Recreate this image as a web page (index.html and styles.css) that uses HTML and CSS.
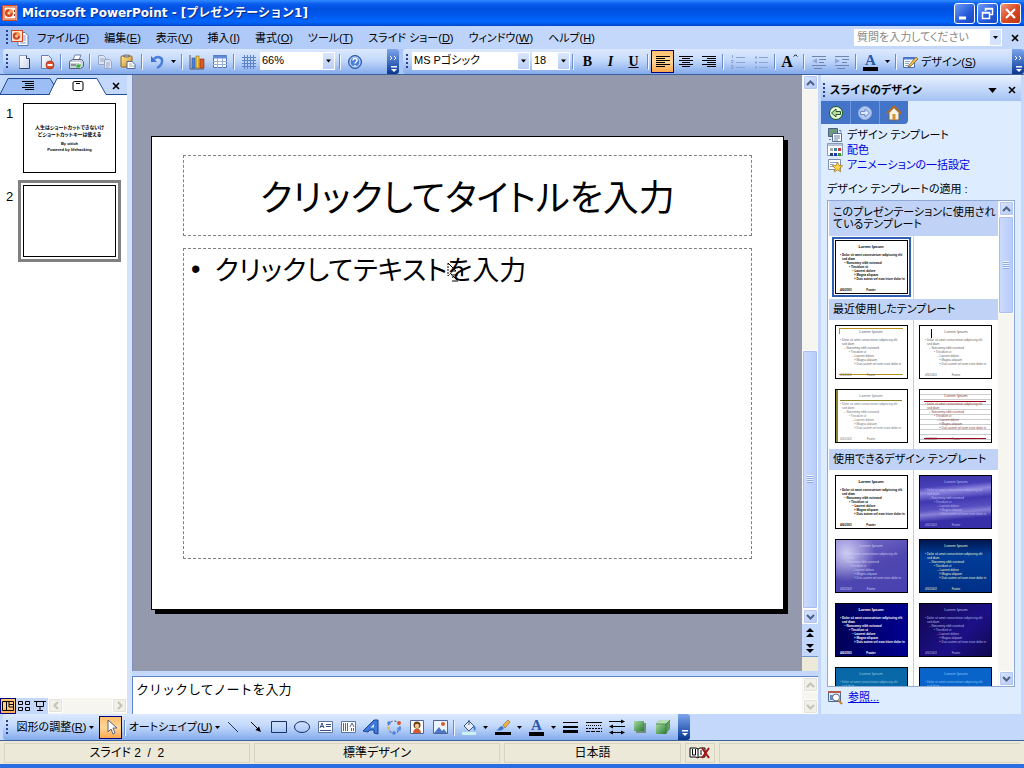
FILE: index.html
```html
<!DOCTYPE html>
<html lang="ja">
<head>
<meta charset="utf-8">
<meta name="viewport" content="width=device-width, initial-scale=1">
<title>Microsoft PowerPoint - [プレゼンテーション1]</title>
<link rel="stylesheet" href="styles.css">
</head>
<body>
<svg class="sprite" aria-hidden="true">
  <defs>
    <linearGradient id="gGold" x2="1" y2="1"><stop offset="0" stop-color="#ffe9a0"/><stop offset="1" stop-color="#c98a1a"/></linearGradient>
    <linearGradient id="gGreen" x2="1" y2="1"><stop offset="0" stop-color="#a5dba0"/><stop offset="1" stop-color="#2c7a35"/></linearGradient>
    <linearGradient id="gPage" x2="1" y2="1"><stop offset="0" stop-color="#fff"/><stop offset="1" stop-color="#c6d3ee"/></linearGradient>
  </defs>
  <symbol id="down" viewBox="0 0 5 3"><path d="M0 0h5L2.500 3z"/></symbol>
  <symbol id="chev-up" viewBox="0 0 9 6"><path d="M1 5l3.500-3.500L8 5" fill="none" stroke="currentColor" stroke-width="2"/></symbol>
  <symbol id="chev-down" viewBox="0 0 9 6"><path d="M1 1l3.500 3.500L8 1" fill="none" stroke="currentColor" stroke-width="2"/></symbol>
  <symbol id="chev-left" viewBox="0 0 6 9"><path d="M5 1L1.500 4.500 5 8" fill="none" stroke="currentColor" stroke-width="2"/></symbol>
  <symbol id="chev-right" viewBox="0 0 6 9"><path d="M1 1l3.500 3.500L1 8" fill="none" stroke="currentColor" stroke-width="2"/></symbol>
  <symbol id="cross" viewBox="0 0 8 8"><path d="M1 1l6 6M7 1L1 7" fill="none" stroke="currentColor" stroke-width="1.600"/></symbol>
  <symbol id="more" viewBox="0 0 9 22"><path d="M1 5l2 2-2 2M5 5l2 2-2 2" fill="none" stroke="#fff"/><path d="M2 15h6v1.500H2zM2 18h6l-3 3z" fill="#fff"/></symbol>
  <symbol id="more-plain" viewBox="0 0 9 22"><path d="M2 14h6v1.500H2zM2 17h6l-3 3z" fill="#fff"/></symbol>
  <symbol id="ppt" viewBox="0 0 16 16"><rect x=".5" y=".5" width="15" height="15" rx="1" fill="#f7d9c4" stroke="#d2451e"/><rect x="2" y="2" width="12" height="12" fill="#fff5ec" stroke="#d2562c"/><circle cx="7" cy="8" r="4" fill="#d2451e"/><circle cx="7" cy="8" r="1.600" fill="#ffd9b8"/><path d="M7 8V4a4 4 0 0 1 4 4z" fill="#f4a04c"/><path d="M12.500 5v2M12.500 9v2" stroke="#933"/></symbol>
  <symbol id="doc" viewBox="0 0 18 16"><path d="M7 2.500h7l3 3v10H7z" fill="#fff" stroke="#5a76b5"/><path d="M12 6h3M12 8h3M12 10h3M9 13h6" stroke="#7c9ad2"/><rect x=".5" y=".5" width="11" height="11" fill="#fbe2d0" stroke="#d2451e"/><circle cx="5.500" cy="6" r="3.700" fill="#d2451e"/><circle cx="5.500" cy="6" r="1.500" fill="#ffd9b8"/><path d="M5.500 6V2.300A3.700 3.700 0 0 1 9.200 6z" fill="#f4a04c"/></symbol>
  <symbol id="new" viewBox="0 0 16 16"><path d="M3.500 1.500h7l3 3v10h-10z" fill="url(#gPage)" stroke="#8a9bc0"/><path d="M13.500 5v9.500h-10" fill="none" stroke="#31456f"/><path d="M10.500 1.500v3h3" fill="#fff" stroke="#31456f"/></symbol>
  <symbol id="perm" viewBox="0 0 16 16"><path d="M2.500 1.500h7l3 3v10h-10z" fill="url(#gPage)" stroke="#6b7da8"/><circle cx="11" cy="11" r="4" fill="#dc4d28" stroke="#a12c10" stroke-width=".7"/><path d="M8.500 11h5" stroke="#fff" stroke-width="2"/></symbol>
  <symbol id="print" viewBox="0 0 16 16"><path d="M5 6l2-5h6l-2 5z" fill="#fff" stroke="#6d80ad"/><path d="M1.500 7.500l3-2h9l2 2v5l-3 2h-11z" fill="#ccd2de" stroke="#56617d"/><path d="M2 8.500h10v5" fill="none" stroke="#fff"/><path d="M9 10.500h4l-1 3H8z" fill="#2fb52f"/><path d="M3 11h5" stroke="#455"/></symbol>
  <symbol id="copy" viewBox="0 0 16 16"><g fill="#dce4f4" stroke="#9aa7c4"><path d="M1.500 1.500h5l2 2v7h-7z"/><path d="M7.500 5.500h5l2 2v7h-7z"/></g><path d="M3 5h4M3 7h4M9 9h4M9 11h4M9 13h3" stroke="#9aa7c4"/></symbol>
  <symbol id="paste" viewBox="0 0 16 16"><rect x="1" y="2" width="11" height="11" rx="1" fill="url(#gGold)" stroke="#946512"/><path d="M4 3V1h5v2z" fill="#bbb" stroke="#555" stroke-width=".7"/><path d="M7 7.500h5l3 3v4H7z" fill="#fff" stroke="#50649a"/><path d="M9 10h3M9 12h5" stroke="#8ba"/></symbol>
  <symbol id="undo" viewBox="0 0 16 16"><path d="M2 2v6h6z" fill="#3c6fd1"/><path d="M5 5c4-4 9-1 8 3-.5 3-3 5-5 6" fill="none" stroke="#4b7fdd" stroke-width="2.500"/></symbol>
  <symbol id="chart" viewBox="0 0 16 16"><path d="M1 1v14h14" fill="none" stroke="#556"/><rect x="3" y="4" width="3" height="10" fill="#4c84dd" stroke="#224d9a" stroke-width=".6"/><rect x="7" y="2" width="3" height="12" fill="#f3c948" stroke="#946512" stroke-width=".6"/><rect x="11" y="5" width="4" height="9" fill="#dd5824" stroke="#902d0c" stroke-width=".6"/></symbol>
  <symbol id="table" viewBox="0 0 16 16"><path d="M1.500 1.500h13v12h-13z" fill="#fff" stroke="#4d73b7"/><path d="M1 3h14" stroke="#5f8bd7" stroke-width="3"/><path d="M1 7.500h14M1 10.500h14M5.500 4v10M10.500 4v10" stroke="#93afdc"/></symbol>
  <symbol id="grid" viewBox="0 0 16 16"><path d="M3.500 1v14M6.500 1v14M9.500 1v14M12.500 1v14M1 3.500h14M1 6.500h14M1 9.500h14M1 12.500h14" stroke="#5d83c8"/></symbol>
  <symbol id="help" viewBox="0 0 16 16"><circle cx="8" cy="8" r="6.500" fill="#4a80db" stroke="#2a549f"/><circle cx="8" cy="8" r="5" fill="none" stroke="#dceaff"/><path d="M6 6.500c0-3 4.500-2.500 4 0C10 8 8 8 8 9.500M8 11v1.500" fill="none" stroke="#fff" stroke-width="1.500"/></symbol>
  <symbol id="al" viewBox="0 0 16 16"><path d="M1 2.500h14M1 4.500h9M1 6.500h14M1 8.500h9M1 10.500h14M1 12.500h9" stroke="#000"/></symbol>
  <symbol id="ac" viewBox="0 0 16 16"><path d="M1 2.500h14M4 4.500h8M1 6.500h14M4 8.500h8M1 10.500h14M4 12.500h8" stroke="#000"/></symbol>
  <symbol id="ar" viewBox="0 0 16 16"><path d="M1 2.500h14M6 4.500h9M1 6.500h14M6 8.500h9M1 10.500h14M6 12.500h9" stroke="#000"/></symbol>
  <symbol id="num" viewBox="0 0 16 16"><path d="M6 3.500h9M6 8.500h9M6 13.500h9M2.500 1v3M1 6.500h2v2H1M1 11.500h2v3H1M1 13h2" fill="none" stroke="#8fa3cf"/></symbol>
  <symbol id="bul" viewBox="0 0 16 16"><path d="M6 3.500h9M6 8.500h9M6 13.500h9" stroke="#8fa3cf"/><path d="M2 2.500h2v2H2zM2 7.500h2v2H2zM2 12.500h2v2H2z" fill="#8fa3cf"/></symbol>
  <symbol id="outd" viewBox="0 0 16 16"><path d="M1 2.500h14M8 5.500h7M8 8.500h5M1 11.500h14M3 14.500h8" stroke="#7184ad"/><path d="M6 4.500v5L1 7z" fill="#8ba7df"/></symbol>
  <symbol id="ind" viewBox="0 0 16 16"><path d="M1 2.500h14M8 5.500h7M8 8.500h5M1 11.500h14M3 14.500h8" stroke="#7184ad"/><path d="M1 4.500v5L6 7z" fill="#8ba7df"/></symbol>
  <symbol id="design" viewBox="0 0 16 16"><path d="M1.500 3.500h11v10h-11z" fill="#fff" stroke="#4d6cad"/><path d="M1 4.500h12" stroke="#4c7ad0" stroke-width="2"/><path d="M3 7.500h5M3 9.500h4M3 11.500h6" stroke="#8aa6d8"/><path d="M7 11l7-8 2 2-7 7-3 1z" fill="#f0c04c" stroke="#6d5120" stroke-width=".7"/></symbol>
  <symbol id="pointer" viewBox="0 0 16 16"><path d="M5 1v12l3-3 2 5 2-1-2-5h4z" fill="#fff" stroke="#56607c"/></symbol>
  <symbol id="line" viewBox="0 0 16 16"><path d="M3 3l10 10" stroke="#19306a"/></symbol>
  <symbol id="arrow" viewBox="0 0 16 16"><path d="M3 3l8 8" stroke="#000"/><path d="M13 13L7.500 11 11 7.500z"/></symbol>
  <symbol id="rect" viewBox="0 0 16 16"><path d="M.5 2.500h15v11H.5z" fill="none" stroke="#19306a"/></symbol>
  <symbol id="oval" viewBox="0 0 16 16"><ellipse cx="8" cy="8" rx="7.500" ry="5.500" fill="none" stroke="#19306a"/></symbol>
  <symbol id="tbox" viewBox="0 0 16 16"><path d="M1.500 2.500h14v11h-14z" fill="#fff" stroke="#5e75a4"/><path d="M3 9l2-5 2 5M4 7.500h2M9 5.500h5M9 7.500h5M3 11.500h11" fill="none" stroke="#344f8a"/></symbol>
  <symbol id="vtbox" viewBox="0 0 16 16"><path d="M1.500 2.500h14v11h-14z" fill="#fff" stroke="#5e75a4"/><path d="M3.500 4v8M5.500 4v8M7.500 4v8M11.500 9v3M13.500 9v3M10 8l2-4 2 4" fill="none" stroke="#4d6595"/></symbol>
  <symbol id="wart" viewBox="0 0 16 16"><path d="M0 12L11 1h4v14l-4-1v-3H7l-2 2z" fill="#3f7bdc" stroke="#1c438f"/><path d="M11 5v3.500H7.500z" fill="#dce9ff"/></symbol>
  <symbol id="diag" viewBox="0 0 16 16"><circle cx="8" cy="8" r="6" fill="none" stroke="#335" stroke-dasharray="2 2"/><circle cx="3" cy="4" r="1.800" fill="#4c80d8"/><circle cx="13" cy="4" r="2" fill="#d05a2a"/><circle cx="2.500" cy="9" r="1.500" fill="#e6bb42"/><circle cx="13" cy="10" r="2" fill="#5c8fe2"/><circle cx="8" cy="14" r="1.800" fill="#4c80d8"/></symbol>
  <symbol id="clip" viewBox="0 0 16 16"><path d="M1.500 1.500h13v13h-13z" fill="#fff" stroke="#50649a"/><path d="M4 14c0-6 8-6 8 0z" fill="#d8592a"/><circle cx="8" cy="6" r="3.500" fill="#6b4120"/><circle cx="8" cy="7" r="2.200" fill="#f5c58c"/></symbol>
  <symbol id="pict" viewBox="0 0 16 16"><path d="M1.500 1.500h14v13h-14z" fill="#eef4ff" stroke="#50649a"/><path d="M2 14l5-6 3 4 2-2 3 4z" fill="#4b78c6"/><circle cx="11" cy="5" r="2" fill="#d95b29"/></symbol>
  <symbol id="fill" viewBox="0 0 16 16"><path d="M3 7l5-5 5 5-5 5z" fill="#e4ecfa" stroke="#3b5380"/><path d="M8 6V1" stroke="#3b5380"/><path d="M12 6c3 1 3 4 2 6-1-1-2-3-2-6z" fill="#3e78d8"/><path d="M1 13h14v3H1z" fill="#c9f2ee"/></symbol>
  <symbol id="lcol" viewBox="0 0 16 16"><path d="M0 13h16v3H0z"/><path d="M1 11c3 0 3-4 6-4l2 2c-2 3-4 3-8 2z" fill="#3f76d2"/><path d="M8 6l5-5 2 2-5 6z" fill="#eeb63e" stroke="#876021" stroke-width=".6"/></symbol>
  <symbol id="lines" viewBox="0 0 16 16"><path d="M0 3.500h15" stroke="#000"/><path d="M0 8h15" stroke="#000" stroke-width="2"/><path d="M0 12.500h15" stroke="#000" stroke-width="3"/></symbol>
  <symbol id="dash" viewBox="0 0 16 16"><path d="M0 3.500h16" stroke="#000"/><path d="M0 6.500h16" stroke="#000" stroke-dasharray="1 1"/><path d="M0 9.500h16" stroke="#000" stroke-dasharray="2 1"/><path d="M0 12.500h16" stroke="#000" stroke-dasharray="4 1"/></symbol>
  <symbol id="arrs" viewBox="0 0 16 16"><path d="M0 2.500h13M3 7.500h13M2 13.500h12" stroke="#000"/><path d="M12 .5l4 2-4 2zM4 5.500l-4 2 4 2zM12 11.500l4 2-4 2zM4 11.500l-4 2 4 2z"/></symbol>
  <symbol id="shad" viewBox="0 0 16 16"><path d="M4 4h10v10H4z" fill="#6f8f78"/><path d="M2 2h10v10H2z" fill="url(#gGreen)"/></symbol>
  <symbol id="cube" viewBox="0 0 16 16"><path d="M1 5l4-4h10v9l-4 5H1z" fill="#5c9d60"/><path d="M1 5h10v10H1z" fill="url(#gGreen)"/><path d="M1 5l4-4h10l-4 4z" fill="#b6dfb2"/><path d="M11 5v10M1 5h10l4-4" fill="none" stroke="#357a3b" stroke-width=".7"/></symbol>
  <symbol id="spell" viewBox="0 0 22 16"><path d="M1 3h6l2 1 2-1h5v9H10l-1 1-2-1H1z" fill="#fff" stroke="#000"/><path d="M9 4v8M3.500 4v6h3V4M12 5v5" fill="none" stroke="#000"/><path d="M13 3l7 10M20 3l-7 10" stroke="#a01414" stroke-width="2"/></symbol>
  <symbol id="back" viewBox="0 0 16 16"><circle cx="8" cy="8" r="6.500" fill="#e9f7df" stroke="#1f5a1f"/><path d="M12.500 6.500H8V4L3.500 8 8 12V9.500h4.500z" fill="#b6dca0" stroke="#245a24"/></symbol>
  <symbol id="fwd" viewBox="0 0 16 16"><circle cx="8" cy="8" r="6.500" fill="#b5c9ef" stroke="#94aee0"/><path d="M3.500 6.500H8V4l4.500 4L8 12V9.500H3.500z" fill="#dde8fb" stroke="#6f8ccc"/></symbol>
  <symbol id="home" viewBox="0 0 16 16"><path d="M3 7h10v8H3z" fill="#f7f1e2" stroke="#70675c"/><path d="M3 8l5-5 5 5z" fill="#f7f1e2"/><path d="M1 8.500L8 1.500l7 7" fill="none" stroke="#b06a22" stroke-width="2"/><path d="M6.500 9h3v6h-3z" fill="#d4902e"/></symbol>
  <symbol id="tpl" viewBox="0 0 16 16"><path d="M1.500 1.500h9v8h-9z" fill="#6d9a7c" stroke="#4a6384"/><path d="M5.500 6.500h9v8h-9z" fill="#fff" stroke="#587097"/><path d="M2 12.500h2M12 3.500h2v2M7 9h6M7 11h6M7 13h4" fill="none" stroke="#6481aa"/></symbol>
  <symbol id="cols" viewBox="0 0 16 16"><path d="M.5 1.500h15v12H.5z" fill="#fff" stroke="#8a9bb8"/><path d="M1 3h14" stroke="#b8c4da" stroke-width="2"/><path d="M3 6h3v3H3z" fill="#aaa"/><path d="M7 6h3v3H7z" fill="#38a"/><path d="M11 6h3v3h-3z" fill="#c33"/><path d="M3 11h3v3H3z" fill="#247"/><path d="M7 11h3v3H7z" fill="#23b"/><path d="M11 11h3v3h-3z" fill="#393"/></symbol>
  <symbol id="anim" viewBox="0 0 16 16"><path d="M1.500 2.500h12v10h-12z" fill="#fff" stroke="#7c8db0"/><path d="M3 5.500h7M3 7.500h4M3 9.500h4" stroke="#8ca2cc"/><path d="M10.500 5l1.500 3.500 3.500.3-2.700 2.400.9 3.600-3.200-2-3.200 2 .9-3.600L5.500 8.800 9 8.500z" fill="#ffd84a" stroke="#a6761a" stroke-width=".8"/></symbol>
  <symbol id="browse" viewBox="0 0 16 16"><path d="M1.500 2.500h12v10h-12z" fill="#dfe9fa" stroke="#50688f"/><path d="M1 3h13" stroke="#b35a4a" stroke-width="2"/><path d="M3 6h3v5H3z" fill="#5d88cc"/><circle cx="9" cy="8.500" r="3.500" fill="#fff" stroke="#5b6a86"/><path d="M11.500 11.500l3.500 3.500" stroke="#c9802a" stroke-width="2"/></symbol>
</svg>
<svg class="hidden" aria-hidden="true">
  <symbol id="lorem" viewBox="0 0 70 52">
    <g fill="currentColor" font-family="Liberation Sans, sans-serif" font-size="3">
      <text x="35" y="7" text-anchor="middle" font-size="4">Lorem Ipsum</text>
      <text x="4" y="15">• Dolor sit amet consectetuer adipiscing elit</text>
      <text x="6" y="18.500">sed diam</text>
      <text x="8" y="23">– Nonummy nibh euismod</text>
      <text x="13" y="27">• Tincidunt ut</text>
      <text x="16" y="31">– Laoreet dolore</text>
      <text x="18" y="35">» Magna aliquam</text>
      <text x="18" y="39">» Duis autem vel eum iriure dolor in</text>
      <text x="4" y="50">4/6/2003</text><text x="35" y="50" text-anchor="middle">Footer</text>
    </g>
  </symbol>
</svg>

<div class="app">
  <header class="titlebar">
    <svg class="i16"><use href="#ppt"/></svg>
    <h1>Microsoft PowerPoint - [プレゼンテーション1]</h1>
    <button class="win" aria-label="最小化"><svg viewBox="0 0 19 19"><path d="M4 14h7" stroke="#fff" stroke-width="3"/></svg></button>
    <button class="win" aria-label="元に戻す"><svg viewBox="0 0 19 19"><path d="M7.500 7V4.500h7v6H12M7 5h8M4.500 8.500h7v6h-7zM4 9h8" fill="none" stroke="#fff" stroke-width="1.500"/></svg></button>
    <button class="win win-close" aria-label="閉じる"><svg viewBox="0 0 19 19"><path d="M5 5l9 9M14 5l-9 9" stroke="#fff" stroke-width="2.200"/></svg></button>
  </header>

  <nav class="menubar">
    <span class="grip"></span>
    <svg class="docicon"><use href="#doc"/></svg>
    <button>ファイル(<u>F</u>)</button><button>編集(<u>E</u>)</button><button>表示(<u>V</u>)</button><button>挿入(<u>I</u>)</button><button>書式(<u>O</u>)</button><button>ツール(<u>T</u>)</button><button>スライド ショー(<u>D</u>)</button><button>ウィンドウ(<u>W</u>)</button><button>ヘルプ(<u>H</u>)</button>
    <div class="ask"><input type="text" placeholder="質問を入力してください" aria-label="質問"><button aria-label="質問の一覧"><svg class="dn"><use href="#down"/></svg></button></div>
    <button class="x" aria-label="文書を閉じる"><svg class="i8"><use href="#cross"/></svg></button>
  </nav>

  <div class="bars">
    <div class="toolbar standard">
      <span class="grip"></span>
      <button class="tb" aria-label="新規作成"><svg><use href="#new"/></svg></button>
      <button class="tb" aria-label="アクセス許可"><svg><use href="#perm"/></svg></button>
      <i class="sep"></i>
      <button class="tb" aria-label="印刷"><svg><use href="#print"/></svg></button>
      <i class="sep"></i>
      <button class="tb" aria-label="コピー"><svg><use href="#copy"/></svg></button>
      <button class="tb" aria-label="貼り付け"><svg><use href="#paste"/></svg></button>
      <i class="sep"></i>
      <button class="tb" aria-label="元に戻す"><svg><use href="#undo"/></svg></button>
      <button class="drop" aria-label="元に戻す一覧"><svg class="dn"><use href="#down"/></svg></button>
      <i class="sep"></i>
      <button class="tb" aria-label="グラフ"><svg><use href="#chart"/></svg></button>
      <button class="tb" aria-label="表"><svg><use href="#table"/></svg></button>
      <i class="sep"></i>
      <button class="tb" aria-label="グリッド"><svg><use href="#grid"/></svg></button>
      <span class="combo zoom"><select aria-label="ズーム"><option>66%</option></select><svg class="dn"><use href="#down"/></svg></span>
      <i class="sep"></i>
      <button class="tb" aria-label="ヘルプ"><svg><use href="#help"/></svg></button>
      <button class="more" aria-label="その他"><svg><use href="#more"/></svg></button>
    </div>
    <div class="toolbar formatting">
      <span class="grip"></span>
      <span class="combo font"><select aria-label="フォント"><option>MS Pゴシック</option></select><svg class="dn"><use href="#down"/></svg></span>
      <span class="combo size"><select aria-label="サイズ"><option>18</option></select><svg class="dn"><use href="#down"/></svg></span>
      <i class="sep"></i>
      <button class="tb letter">B</button><button class="tb letter ital">I</button><button class="tb letter und">U</button>
      <i class="sep"></i>
      <button class="tb on" aria-label="左揃え"><svg><use href="#al"/></svg></button>
      <button class="tb" aria-label="中央揃え"><svg><use href="#ac"/></svg></button>
      <button class="tb" aria-label="右揃え"><svg><use href="#ar"/></svg></button>
      <i class="sep"></i>
      <button class="tb" aria-label="段落番号"><svg><use href="#num"/></svg></button>
      <button class="tb" aria-label="箇条書き"><svg><use href="#bul"/></svg></button>
      <i class="sep"></i>
      <button class="tb grow" aria-label="フォントの拡大">A<svg class="dn"><use href="#chev-up"/></svg></button>
      <i class="sep"></i>
      <button class="tb" aria-label="インデント解除"><svg><use href="#outd"/></svg></button>
      <button class="tb" aria-label="インデント"><svg><use href="#ind"/></svg></button>
      <i class="sep"></i>
      <button class="tb color" aria-label="フォントの色">A</button>
      <button class="drop" aria-label="色の一覧"><svg class="dn"><use href="#down"/></svg></button>
      <i class="sep"></i>
      <button class="tb wide"><svg><use href="#design"/></svg><span>デザイン(<u>S</u>)</span></button>
      <button class="more" aria-label="その他"><svg><use href="#more"/></svg></button>
    </div>
  </div>

  <main class="work">
    <aside class="outline">
      <div class="tabs">
        <svg class="tabart" viewBox="0 0 127 18"><path d="M0 17.500L8 1.500h42l5 8-5 8z" fill="#9dbef5" stroke="#1e4a9c"/><path d="M49 17.500l8-16h40l9 16" fill="#fff" stroke="#1e4a9c"/><path d="M106 17.500h21" stroke="#1e4a9c"/></svg>
        <button class="tab" aria-label="アウトライン"><svg viewBox="0 0 14 12"><path d="M1 1.500h12M4 3.500h9M4 5.500h9M1 7.500h12M4 9.500h9" stroke="#000"/></svg></button>
        <button class="tab" aria-label="スライド"><svg viewBox="0 0 14 12"><rect x="2" y="1.500" width="10" height="9" rx="1.500" fill="#fff" stroke="#000"/><path d="M5 3.500h4" stroke="#000"/></svg></button>
        <button class="x" aria-label="閉じる"><svg class="i8"><use href="#cross"/></svg></button>
      </div>
      <ol class="slides">
        <li><span>1</span><button class="mini"><b>人生はショートカットできないけ<br>どショートカットキーは使える</b><small>By ottich<br>Powered by lifehacking</small></button></li>
        <li class="cur"><span>2</span><button class="mini" aria-label="スライド 2"></button></li>
      </ol>
      <div class="views">
        <button class="view on" aria-label="標準表示"><svg viewBox="0 0 14 12"><path d="M1.500 1.500h11v9h-11zM5.500 1v10M8 4.500h4M8 1v6h4" fill="none" stroke="#000"/></svg></button>
        <button class="view" aria-label="一覧表示"><svg viewBox="0 0 14 12"><path d="M1.500 1.500h4v3h-4zM8.500 1.500h4v3h-4zM1.500 7.500h4v3h-4zM8.500 7.500h4v3h-4z" fill="none" stroke="#000"/></svg></button>
        <button class="view" aria-label="スライド ショー"><svg viewBox="0 0 14 12"><path d="M1 1.500h12M3.500 2v4.500h7V2M7 7v4M4 10.500h6" fill="none" stroke="#000"/></svg></button>
        <div class="hscroll"><button class="sb off" aria-label="左"><svg class="lr"><use href="#chev-left"/></svg></button><button class="sb off" aria-label="右"><svg class="lr"><use href="#chev-right"/></svg></button></div>
      </div>
    </aside>

    <section class="editor">
      <div class="stage">
        <div class="canvas">
          <article class="slide">
            <h2 class="ph title">クリックしてタイトルを入力</h2>
            <div class="ph body"><ul><li>クリックしてテキストを入力</li></ul>
              <svg class="wait" viewBox="0 0 12 20"><path d="M1 1v13l3-3 2 5" fill="none" stroke="#000" stroke-dasharray="2 1"/><path d="M1 1l8 8H5M5 13h6M5 19h6M6 14l4 4" fill="none" stroke="#000"/></svg>
            </div>
          </article>
        </div>
        <div class="vscroll">
          <button class="sb" aria-label="上"><svg class="ud"><use href="#chev-up"/></svg></button>
          <div class="track low"><span class="thumb"></span></div>
          <button class="sb" aria-label="下"><svg class="ud"><use href="#chev-down"/></svg></button>
          <button class="jump" aria-label="前のスライド"><svg viewBox="0 0 8 9"><path d="M4 0l4 4H0zM4 5l4 4H0z"/></svg></button>
          <button class="jump" aria-label="次のスライド"><svg viewBox="0 0 8 9"><path d="M0 0h8L4 4zM0 5h8L4 9z"/></svg></button>
          <span class="corner"></span>
        </div>
      </div>
      <div class="notes">
        <textarea aria-label="ノート">クリックしてノートを入力</textarea>
        <div class="vscroll"><button class="sb off" aria-label="上"><svg class="ud"><use href="#chev-up"/></svg></button><div class="track"></div><button class="sb off" aria-label="下"><svg class="ud"><use href="#chev-down"/></svg></button></div>
      </div>
    </section>

    <aside class="task">
      <header><span class="grip"></span><h3>スライドのデザイン</h3><button aria-label="作業ウィンドウの選択"><svg class="big"><use href="#down"/></svg></button><button aria-label="閉じる"><svg class="i8"><use href="#cross"/></svg></button></header>
      <div class="navbar"><button aria-label="戻る"><svg><use href="#back"/></svg></button><button aria-label="進む"><svg><use href="#fwd"/></svg></button><button aria-label="ホーム"><svg><use href="#home"/></svg></button></div>
      <ul class="links">
        <li><svg><use href="#tpl"/></svg>デザイン テンプレート</li>
        <li><svg><use href="#cols"/></svg><a href="#">配色</a></li>
        <li><svg><use href="#anim"/></svg><a href="#">アニメーションの一括設定</a></li>
      </ul>
      <p class="lbl">デザイン テンプレートの適用 :</p>
      <div class="list">
        <div class="groups">
          <h4>このプレゼンテーションに使用され<br>ているテンプレート</h4>
          <div class="cells"><button class="t plain sel"><svg><use href="#lorem"/></svg></button></div>
          <h4>最近使用したテンプレート</h4>
          <div class="cells">
            <button class="t gold"><svg><use href="#lorem"/></svg></button><button class="t bar"><svg><use href="#lorem"/></svg></button>
            <button class="t olive"><svg><use href="#lorem"/></svg></button><button class="t ruled"><svg><use href="#lorem"/></svg></button>
          </div>
          <h4>使用できるデザイン テンプレート</h4>
          <div class="cells">
            <button class="t plain"><svg><use href="#lorem"/></svg></button><button class="t sky"><svg><use href="#lorem"/></svg></button>
            <button class="t sky2"><svg><use href="#lorem"/></svg></button><button class="t ocean"><svg><use href="#lorem"/></svg></button>
            <button class="t navy"><svg><use href="#lorem"/></svg></button><button class="t dusk"><svg><use href="#lorem"/></svg></button>
            <button class="t teal"><svg><use href="#lorem"/></svg></button><button class="t azure"><svg><use href="#lorem"/></svg></button>
          </div>
        </div>
        <div class="vscroll"><button class="sb" aria-label="上"><svg class="ud"><use href="#chev-up"/></svg></button><div class="track"><span class="thumb short"></span></div><button class="sb" aria-label="下"><svg class="ud"><use href="#chev-down"/></svg></button></div>
      </div>
      <div class="browse"><svg><use href="#browse"/></svg><a href="#">参照...</a></div>
    </aside>
  </main>

  <div class="drawbar">
    <div class="toolbar drawing">
      <span class="grip"></span>
      <button class="tb wide adjust"><span>図形の調整(<u>R</u>)</span><svg class="dn"><use href="#down"/></svg></button>
      <button class="tb on" aria-label="選択"><svg><use href="#pointer"/></svg></button>
      <i class="sep"></i>
      <button class="tb wide shapes"><span>オートシェイプ(<u>U</u>)</span><svg class="dn"><use href="#down"/></svg></button>
      <button class="tb" aria-label="直線"><svg><use href="#line"/></svg></button>
      <button class="tb" aria-label="矢印"><svg><use href="#arrow"/></svg></button>
      <button class="tb" aria-label="四角形"><svg><use href="#rect"/></svg></button>
      <button class="tb" aria-label="楕円"><svg><use href="#oval"/></svg></button>
      <button class="tb" aria-label="テキスト ボックス"><svg><use href="#tbox"/></svg></button>
      <button class="tb" aria-label="縦書き"><svg><use href="#vtbox"/></svg></button>
      <button class="tb" aria-label="ワードアート"><svg><use href="#wart"/></svg></button>
      <button class="tb" aria-label="図表"><svg><use href="#diag"/></svg></button>
      <button class="tb" aria-label="クリップアート"><svg><use href="#clip"/></svg></button>
      <button class="tb" aria-label="図"><svg><use href="#pict"/></svg></button>
      <i class="sep"></i>
      <button class="tb" aria-label="塗りつぶし"><svg><use href="#fill"/></svg></button><button class="drop" aria-label="塗りつぶし一覧"><svg class="dn"><use href="#down"/></svg></button>
      <button class="tb" aria-label="線の色"><svg><use href="#lcol"/></svg></button><button class="drop" aria-label="線の色一覧"><svg class="dn"><use href="#down"/></svg></button>
      <button class="tb color" aria-label="フォントの色">A</button><button class="drop" aria-label="フォントの色一覧"><svg class="dn"><use href="#down"/></svg></button>
      <button class="tb" aria-label="線"><svg><use href="#lines"/></svg></button>
      <button class="tb" aria-label="点線"><svg><use href="#dash"/></svg></button>
      <button class="tb" aria-label="矢印の種類"><svg><use href="#arrs"/></svg></button>
      <button class="tb" aria-label="影"><svg><use href="#shad"/></svg></button>
      <button class="tb" aria-label="3-D"><svg><use href="#cube"/></svg></button>
      <button class="more" aria-label="その他"><svg><use href="#more-plain"/></svg></button>
    </div>
  </div>

  <footer class="status">
    <span>スライド 2 &nbsp;/&nbsp; 2</span><span>標準デザイン</span><span class="lang">日本語</span><span class="sp"><svg><use href="#spell"/></svg></span><span class="rest"></span>
  </footer>
</div>
</body>
</html>
```
FILE: styles.css
```css
* { box-sizing: border-box; }
body {
  margin: 0;
  font: 11px/16px "Liberation Sans", "Noto Sans CJK JP", sans-serif;
  font-feature-settings: "palt";
  color: #000;
}
button, input, select, textarea {
  font: inherit; font-feature-settings: inherit; color: inherit;
  margin: 0; padding: 0; border: 0; background: none; border-radius: 0;
}
button { display: flex; align-items: center; justify-content: center; flex: none; white-space: nowrap; }
h1, h2, h3, h4, p, ul, ol { margin: 0; padding: 0; font-weight: normal; }
ul, ol { list-style: none; }
svg { display: block; flex: none; }
a { color: #0000e0; text-decoration: none; }
.sprite { position: absolute; width: 0; height: 0; }
.hidden { display: none; }
.i16 { width: 16px; height: 16px; }
.i8 { width: 8px; height: 8px; }
.dn { width: 5px; height: 3px; }
.app { min-height: 100vh; display: flex; flex-direction: column; background: #c4d8fc; border-bottom: 4px solid #2a6fe0; }

.titlebar {
  height: 26px; display: flex; align-items: center; gap: 2px; padding: 0 3px 0 2px; color: #fff;
  background: linear-gradient(#2f8bff 0, #0a5cee 4px, #0050e0 9px, #0058ee 15px, #0066ff 22px, #0046c8 26px);
}
.titlebar h1 { flex: 1; margin-left: 2px; font: bold 12px/16px "DejaVu Sans", "Noto Sans CJK JP", sans-serif; text-shadow: 1px 1px #0a2a80; }
.win { width: 21px; height: 21px; border: 1px solid #fff; border-radius: 3px; background: linear-gradient(135deg, #6d9cf8, #2458d8 60%, #1c49c0); }
.win svg { width: 19px; height: 19px; }
.win-close { background: linear-gradient(135deg, #f09a80, #dc4a24 50%, #b93410); }

.grip { flex: none; width: 2px; height: 15px; background: repeating-linear-gradient(#27418f 0 2px, transparent 2px 4px); }
.menubar { height: 23px; display: flex; align-items: center; gap: 15px; padding: 0 5px 0 6px; background: linear-gradient(90deg, #9ebef5, #c4d8fc 55%); }
.menubar .docicon { width: 18px; height: 16px; margin: 0 -7px 0 -12px; }
.ask { display: flex; width: 148px; height: 17px; margin-left: auto; background: #fff; color: #777; }
.ask input { flex: 1; min-width: 0; padding-left: 3px; line-height: 15px; }
.ask input::placeholder { color: #888; }
.ask button { width: 13px; background: #d4e2fb; color: #000; border: 1px solid #fff; }
.menubar .x { margin-left: -6px; }

.bars { display: flex; gap: 4px; height: 26px; padding-left: 3px; background: #a9c7f8; border-bottom: 1px solid #3b619c; }
.toolbar { display: flex; align-items: center; border-radius: 3px; background: linear-gradient(#dde9fe, #c3d9fb 45%, #84aaec); }
.toolbar .grip { margin: 0 4px 0 3px; }
.standard { flex: none; width: 396px; }
.formatting { flex: 1; min-width: 0; }
.tb { width: 23px; height: 23px; }
.tb svg { width: 16px; height: 16px; }
.tb .dn, .drop .dn { width: 5px; height: 3px; }
.drop { width: 11px; height: 23px; }
.wide { width: auto; gap: 3px; padding: 0 3px; }
.sep { flex: none; width: 1px; height: 15px; margin: 0 3px 0 2px; background: #6a8ccb; box-shadow: 1px 1px #f0f6ff; }
.on { border: 1px solid #000080; background: linear-gradient(#ffc06c, #ffd696 50%, #ffa64c); }
.letter { font: bold 14px/16px "Liberation Serif", serif; }
.ital { font-style: italic; }
.und { text-decoration: underline; }
.grow { font: bold 16px/16px "Liberation Serif", serif; }
.grow .dn { align-self: flex-start; margin-top: 4px; }
.color { height: 18px; align-items: flex-start; font: bold 15px/14px "Liberation Serif", serif; color: #2b58ac; position: relative; }
.color::after { content: ""; position: absolute; left: 4px; right: 4px; bottom: 0; height: 4px; background: #000; }
.more { align-self: stretch; width: 12px; margin-left: auto; border-radius: 0 3px 3px 0; background: linear-gradient(#7ea5ec, #1d4ea8 80%, #0d3588); }
.more svg { width: 9px; height: 22px; }
.combo { position: relative; flex: none; height: 18px; display: flex; background: #fff; margin-top: -1px; }
.combo select { flex: 1; min-width: 0; appearance: none; padding: 0 12px 2px 2px; line-height: 15px; outline: none; }
.combo .dn { position: absolute; right: 1px; top: 1px; width: 11px; height: 16px; padding: 6px 3px; background: linear-gradient(#dbe7fc, #b9cff6); pointer-events: none; }
.zoom { width: 75px; margin-right: 2px; }
.font { width: 118px; margin-right: 2px; }
.size { width: 38px; }

.work { flex: 1; min-height: 0; display: flex; }
.outline { flex: none; width: 132px; display: flex; flex-direction: column; background: #fff; border-right: 5px solid #d5e2fc; }
.tabs { position: relative; height: 20px; padding-top: 2px; display: flex; align-items: center; background: linear-gradient(#c4d8fc 19px, #fff 19px); }
.tabart { position: absolute; left: 0; top: 2px; width: 127px; height: 18px; }
.tab { position: relative; width: 56px; }
.tab + .tab { width: 44px; }
.tab svg { width: 14px; height: 12px; }
.tabs .x { position: relative; margin-left: 12px; }
.slides { flex: 1; padding: 8px 7px 0 6px; font-size: 13px; }
.slides li { display: flex; justify-content: space-between; align-items: flex-start; margin-bottom: 4px; }
.slides span { padding-top: 3px; }
.mini { width: 93px; height: 70px; margin: 0 4px 4px; border: 1px solid #000; background: #fff; flex-direction: column; font-size: 5px; line-height: 7px; }
.mini small { font-size: 4px; line-height: 6px; font-weight: bold; margin-top: 3px; }
.cur .mini { height: 72px; margin: 4px; outline: 3px solid #808080; outline-offset: 2px; }
.cur span { padding-top: 8px; }
.views { height: 16px; display: flex; background: #c4d8fc; }
.view { width: 16px; }
.view svg { width: 14px; height: 12px; }
.hscroll { flex: 1; display: flex; justify-content: space-between; background: #f6f5ef; }

.sb { width: 15px; height: 15px; border: 1px solid #fff; border-radius: 2px; background: linear-gradient(135deg, #dbe6fe, #b4c8f8); color: #4d6185; box-shadow: inset 0 0 0 1px #b4c6ee; }
.off { background: #f1f0e9; color: #c4c3b8; box-shadow: inset 0 0 0 1px #e4e2d8; }
.ud { width: 9px; height: 6px; }
.lr { width: 6px; height: 9px; }
.vscroll { flex: none; width: 16px; display: flex; flex-direction: column; align-items: center; background: #f6f5f0; }
.track { flex: 1; width: 100%; display: flex; flex-direction: column; }
.low { justify-content: flex-end; }
.thumb { height: 50%; border: 1px solid #fff; border-radius: 2px; background: repeating-linear-gradient(#eef4fe 0 1px, #8caaf0 1px 2px) center/6px 8px no-repeat, linear-gradient(90deg, #cddcfe, #b7cbf9); box-shadow: inset 0 0 0 1px #a8bdf0; }
.short { height: 98px; }

.editor { flex: 1; min-width: 0; display: flex; flex-direction: column; }
.stage { flex: 1; display: flex; }
.canvas { flex: 1; display: flex; align-items: center; justify-content: center; padding: 0 18px; background: #9499ae; border-left: 1px solid #8090b8; }
.slide { width: 100%; aspect-ratio: 4 / 3; display: flex; flex-direction: column; gap: 12px; padding: 18px 31px 50px; background: #fff; border: 1px solid #000; box-shadow: 4px 4px #000; }
.ph { border: 1px dashed #808080; font-family: "Noto Sans CJK JP", sans-serif; }
.title { height: 81px; display: flex; align-items: center; justify-content: center; font-size: 36px; line-height: 48px; }
.body { position: relative; flex: 1; padding: 0 7px; font-size: 27px; line-height: 40px; }
.body li { display: flex; gap: 14px; }
.body li::before { content: "•"; font-family: "Liberation Sans", sans-serif; }
.wait { position: absolute; left: 263px; top: 13px; width: 12px; height: 20px; }
.jump { width: 16px; height: 16px; background: #c4d8fc; }
.jump svg { width: 8px; height: 9px; }
.corner { align-self: stretch; height: 15px; background: #ece9d8; border-top: 1px solid #6f93d4; }
.notes { height: 38px; display: flex; border-top: 1px solid #5f84c8; margin-top: 5px; background: #fff; }
.notes textarea { flex: 1; min-width: 0; resize: none; border-left: 1px solid #5f84c8; padding: 4px 3px; font-family: "Noto Sans CJK JP", sans-serif; font-feature-settings: normal; font-size: 13px; outline: none; }

.task { flex: none; width: 206px; display: flex; flex-direction: column; padding: 0 0 2px; border-left: 3px solid #c4d8fc; background: #ddecfe; border-right: 3px solid #c4d8fc; }
.task header { height: 26px; display: flex; align-items: center; gap: 11px; padding: 4px 5px 0 2px; background: linear-gradient(#eaf2ff, #a4c2f4); }
.task header .grip { margin-right: -6px; }
.task h3 { flex: 1; font-weight: bold; font-size: 11px; }
.big { width: 9px; height: 5px; }
.navbar { align-self: flex-start; display: flex; width: 87px; height: 23px; background: #4474c8; border-radius: 0 0 4px 0; }
.navbar button { width: 29px; }
.navbar button + button { border-left: 1px solid #6f96de; }
.navbar svg, .links svg, .browse svg { width: 16px; height: 16px; }
.links { padding: 3px 6px 0; }
.links li { display: flex; align-items: center; gap: 4px; height: 15px; }
.lbl { padding: 9px 6px 3px; }
.list { flex: 1 1 0; min-height: 0; display: flex; margin: 0 6px; border: 1px solid #8fa9d6; background: #fff; overflow: hidden; }
.groups { flex: 1; min-width: 0; overflow: hidden; padding-left: 1px; }
.groups h4 { background: #c0d3f7; padding: 3px 0 3px 4px; font-size: 11px; line-height: 15px; white-space: nowrap; }
.groups h4:first-child { line-height: 12px; padding: 5px 0 6px 4px; }
.cells { display: grid; grid-template-columns: 1fr 1fr; padding-bottom: 1px; background: linear-gradient(90deg, transparent 50%, #c0cee8 50%, #c0cee8 calc(50% + 1px), transparent calc(50% + 1px)); }
.t { width: 73px; height: 54px; margin: 5px; justify-self: center; border: 1px solid #000; overflow: hidden; }
.t svg { width: 70px; height: 52px; }
.sel { margin: 4px 5px; outline: 2px solid #2f5fb4; outline-offset: 1px; }
.plain { font-weight: bold; color: #000; background: #fff; }
.gold { color: #666; background: linear-gradient(#b8901c, #b8901c) 3px 2px/64px 1px no-repeat, linear-gradient(#b8901c, #b8901c) 3px 48px/64px 1px no-repeat, linear-gradient(#b8901c, #b8901c) 3px 2px/1px 6px no-repeat, #fff; }
.bar { color: #666; background: linear-gradient(#000, #000) 11px 3px/1px 9px no-repeat, #fff; }
.olive { color: #777; background: linear-gradient(#8c8428, #8c8428) 4px 10px/62px 1px no-repeat, linear-gradient(90deg, #8c8428 2px, #fff 2px); }
.ruled { color: #844; background: linear-gradient(#a00020, #a00020) 4px 11px/62px 1px no-repeat, linear-gradient(#a00020, #a00020) 4px 48px/62px 1px no-repeat, repeating-linear-gradient(#fff 0 4px, #ccc 4px 5px); }
.sky { color: #b8b8f0; background: linear-gradient(175deg, #3a32a8, #4840b8 20%, #9088e0 30%, #4038b0 45%, #5850c0 60%, #8880d8 68%, #3830a8 80%); }
.sky2 { color: #c8c8f0; background: radial-gradient(circle at 15% 25%, #d0ccf4, transparent 40%), linear-gradient(160deg, #7870cc, #5048b0 50%, #4840b0); }
.ocean { color: #e8f0c8; background: linear-gradient(#001850, #003c98 30%, #003088); }
.navy { font-weight: bold; color: #fff; background: linear-gradient(90deg, #000058, #000090); }
.dusk { color: #b8b8e0; background: linear-gradient(135deg, #100850, #1c1088 60%, #100850); }
.teal { color: #8cc8e0; background: #0868a8; }
.azure { color: #8cc0f0; background: #0864c8; }
.browse { display: flex; align-items: center; gap: 5px; padding: 2px 6px 7px; }
.browse a { text-decoration: underline; }

.drawbar { height: 27px; display: flex; padding-left: 3px; background: #c4d8fc; border-bottom: 1px solid #3b619c; }
.drawing { width: 687px; }
.adjust { width: 87px; }
.shapes { width: 93px; }
.status { height: 23px; display: flex; gap: 4px; padding: 2px 4px 1px; background: #ece9d8; font-size: 12px; }
.status span { width: 246px; border: 1px solid #d8d4c2; display: flex; align-items: center; justify-content: center; }
.status .lang { width: 177px; }
.status .sp { width: 30px; }
.status .sp svg { width: 22px; height: 16px; }
.status .rest { flex: 1; border-right: 0; }
```
